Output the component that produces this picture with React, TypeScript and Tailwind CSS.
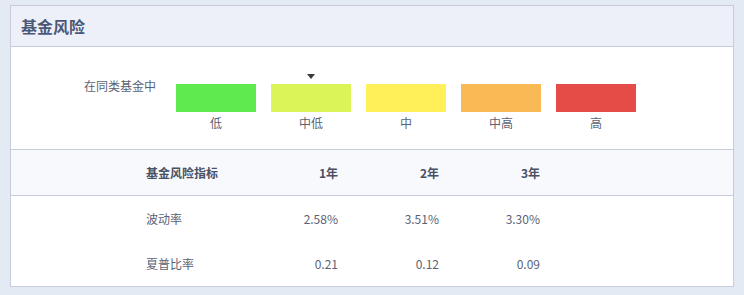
import React from "react";

const bars = [
  { label: "低", color: "bg-[#5fea50]" },
  { label: "中低", color: "bg-[#dbf457]", active: true },
  { label: "中", color: "bg-[#fff05a]" },
  { label: "中高", color: "bg-[#f9ba55]" },
  { label: "高", color: "bg-[#e54b47]" },
];

const rows = [
  { name: "波动率", v: ["2.58%", "3.51%", "3.30%"] },
  { name: "夏普比率", v: ["0.21", "0.12", "0.09"] },
];

const grid = "grid grid-cols-[135px_91px_101px_101px_101px_1fr] items-center";

export default function App() {
  return (
    <div
      className="w-[744px] h-[295px] bg-[#e4eaf3] pt-[5px] pl-[10px]"
      style={{ fontFamily: '"Noto Sans CJK SC", "Noto Sans", sans-serif' }}
    >
      <div className="w-[724px] border border-[#c7cbdb] bg-white">
        <div className="h-[41px] bg-[#edf0f8] border-b border-[#c7cbdb] flex items-center pl-[10px]">
          <span className="text-[16px] font-bold text-[#4b5878] leading-none -mt-[1px]">基金风险</span>
        </div>
        <div className="h-[103px] border-b border-[#c7cbdb] flex items-start pt-[37px] pl-[73px]">
          <div className="text-[12px] leading-[18px] text-[#5a6276] -mt-[7px]">在同类基金中</div>
          <div className="flex gap-[15px] ml-[20px]">
            {bars.map((b) => (
              <div key={b.label} className="relative w-[80px] flex flex-col items-center">
                {b.active && (
                  <div className="absolute -top-[10px] left-[36px] w-0 h-0 border-l-[4.5px] border-r-[4.5px] border-t-[5px] border-l-transparent border-r-transparent border-t-[#3a3a3a]" />
                )}
                <div className={`w-[80px] h-[28px] ${b.color}`} />
                <div className="text-[12px] leading-[18px] mt-[2px] text-[#5a6276]">{b.label}</div>
              </div>
            ))}
          </div>
        </div>
        <div className={`${grid} h-[46px] bg-[#f7f9fd] border-b border-[#c7cbdb] text-[12px] font-bold text-[#4a5064]`}>
          <div />
          <div className="whitespace-nowrap">基金风险指标</div>
          <div className="text-right">1年</div>
          <div className="text-right">2年</div>
          <div className="text-right">3年</div>
          <div />
        </div>
        {rows.map((r) => (
          <div key={r.name} className={`${grid} h-[45px] text-[12px] text-[#5a6276]`}>
            <div />
            <div className="whitespace-nowrap">{r.name}</div>
            {r.v.map((x, i) => (
              <div key={i} className="text-right">{x}</div>
            ))}
            <div />
          </div>
        ))}
      </div>
    </div>
  );
}
